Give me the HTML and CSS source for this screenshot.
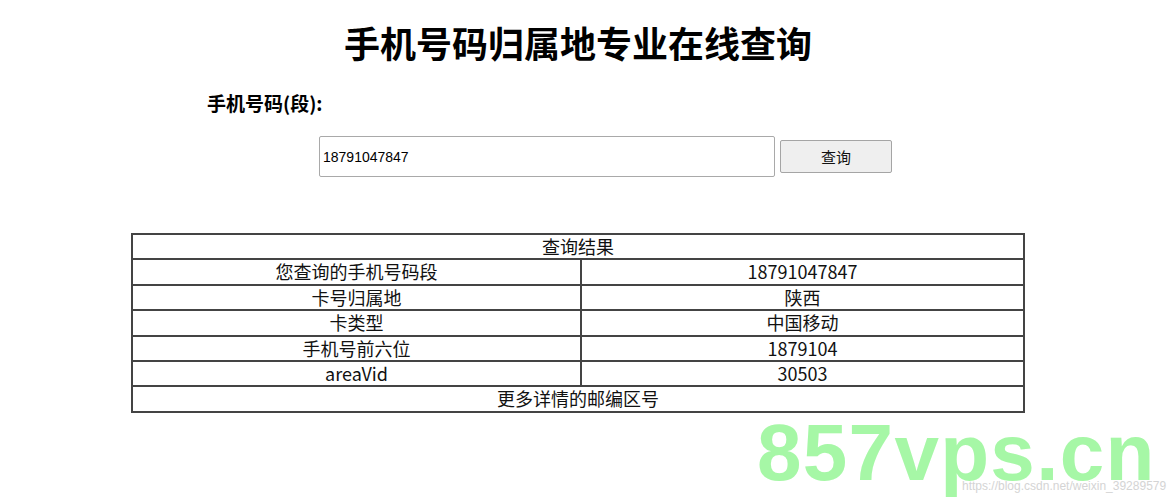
FILE: index.html
```html
<!DOCTYPE html>
<html lang="zh-CN">
<head>
<meta charset="utf-8">
<title>手机号码归属地专业在线查询</title>
<link rel="stylesheet" href="styles.css">
</head>
<body>
<div class="page">
  <h1 class="title">手机号码归属地专业在线查询</h1>
  <div class="label">手机号码(段):</div>
  <div class="query">
    <input class="phone" type="text" value="18791047847">
    <button class="btn" type="button">查询</button>
  </div>
  <table class="result">
    <tr><td colspan="2">查询结果</td></tr>
    <tr><td class="key">您查询的手机号码段</td><td>18791047847</td></tr>
    <tr><td class="key">卡号归属地</td><td>陕西</td></tr>
    <tr><td class="key">卡类型</td><td>中国移动</td></tr>
    <tr><td class="key">手机号前六位</td><td>1879104</td></tr>
    <tr><td class="key">areaVid</td><td>30503</td></tr>
    <tr><td colspan="2">更多详情的邮编区号</td></tr>
  </table>
</div>
<div class="watermark">857vps.cn</div>
<div class="csdn">https://blog.csdn.net/weixin_39289579</div>
</body>
</html>
```
FILE: styles.css
```css
html, body {
  margin: 0;
  padding: 0;
  background: #fff;
}
body {
  font-family: "Noto Sans CJK SC", "Noto Sans", sans-serif;
  color: #111;
  position: relative;
  height: 500px;
  overflow: hidden;
}
.page {
  width: 1156px;
}
.title {
  margin: 18px 0 0;
  font-size: 36px;
  line-height: 48px;
  font-weight: 700;
  text-align: center;
  color: #000;
}
.label {
  margin-top: 24px;
  padding-left: 207px;
  font-size: 19px;
  line-height: 26px;
  font-weight: 700;
  color: #000;
}
.query {
  margin-top: 20px;
  padding-left: 319px;
  display: flex;
  align-items: center;
}
.phone {
  box-sizing: border-box;
  width: 456px;
  height: 41px;
  margin: 0;
  padding: 0 3px;
  border: 1px solid #a9a9a9;
  border-radius: 2px;
  font-family: "Liberation Sans", Arial, sans-serif;
  font-size: 14px;
  color: #000;
  outline: none;
}
.btn {
  box-sizing: border-box;
  width: 112px;
  height: 33px;
  margin: 0 0 0 5px;
  border: 1px solid #a5a5a5;
  border-radius: 2px;
  background: #efefef;
  font-family: "Noto Sans CJK SC", sans-serif;
  font-size: 15px;
  color: #111;
  padding: 0;
}
.result {
  margin: 56px 0 0 131px;
  width: 894px;
  border-spacing: 0;
  border: 1px solid #444;
  font-size: 18px;
}
.result td {
  border: 1px solid #444;
  padding: 0;
  line-height: 23.4px;
  text-align: center;
  color: #111;
}
.result td.key {
  width: 447px;
}
.watermark {
  position: absolute;
  left: 757px;
  top: 427px;
  font-family: "Liberation Sans", Arial, sans-serif;
  font-weight: 700;
  font-size: 80px;
  line-height: 52px;
  color: #a6f7a6;
  letter-spacing: 1.3px;
}
.csdn {
  position: absolute;
  left: 962px;
  top: 480px;
  font-family: "Liberation Sans", Arial, sans-serif;
  font-size: 12px;
  line-height: 12px;
  color: #d4d4d4;
}
```
